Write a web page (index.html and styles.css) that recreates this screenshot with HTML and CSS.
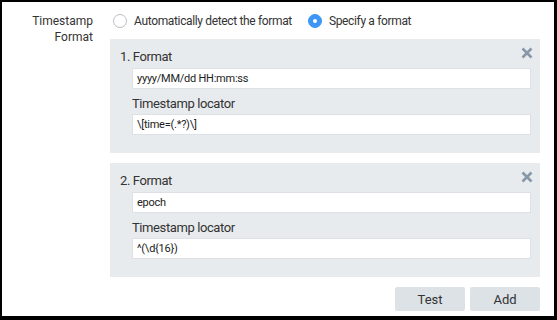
FILE: index.html
```html
<!DOCTYPE html>
<html lang="en">

<head>
    <meta charset="UTF-8">
    <meta name="viewport" content="width=device-width, initial-scale=1.0">
    <title>Timestamp Format</title>
    <link rel="stylesheet" href="styles.css">
</head>

<body>
    <div class="frame">
        <div class="field">
            <div class="field-label">Timestamp Format</div>

            <div class="field-body">
                <!-- Mode -->
                <div class="radios">
                    <label class="radio"><span class="dot"></span>Automatically detect the format</label>
                    <label class="radio checked"><span class="dot"></span>Specify a format</label>
                </div>

                <!-- Formats -->
                <div class="format">
                    <button class="remove" title="Remove">
                        <svg width="12" height="12" viewBox="0 0 12 12"><path d="M1.5 1.5 L10.5 10.5 M10.5 1.5 L1.5 10.5" stroke="#8797a8" stroke-width="2.6" /></svg>
                    </button>
                    <div class="format-title">1. Format</div>
                    <input class="text" type="text" value="yyyy/MM/dd HH:mm:ss">
                    <div class="sub-label">Timestamp locator</div>
                    <input class="text" type="text" value="\[time=(.*?)\]">
                </div>

                <div class="format">
                    <button class="remove" title="Remove">
                        <svg width="12" height="12" viewBox="0 0 12 12"><path d="M1.5 1.5 L10.5 10.5 M10.5 1.5 L1.5 10.5" stroke="#8797a8" stroke-width="2.6" /></svg>
                    </button>
                    <div class="format-title">2. Format</div>
                    <input class="text" type="text" value="epoch">
                    <div class="sub-label">Timestamp locator</div>
                    <input class="text" type="text" value="^(\d{16})">
                </div>

                <div class="actions">
                    <button class="btn">Test</button>
                    <button class="btn">Add</button>
                </div>
            </div>
        </div>
    </div>
</body>

</html>
```

FILE: styles.css
```css
* {
    box-sizing: border-box;
}

body {
    margin: 0;
    font-family: Roboto, "Liberation Sans", sans-serif;
    font-size: 12px;
    color: #333;
    background-color: #000;
}

.frame {
    width: 557px;
    height: 320px;
    background-color: #fff;
    border-style: solid;
    border-color: #000;
    border-width: 2px 3px 4px 2px;
    border-bottom-right-radius: 4px;
}

.field {
    display: grid;
    grid-template-columns: 91px 430px;
    column-gap: 17px;
}

.field-label {
    padding-top: 11px;
    text-align: right;
    font-size: 12px;
    line-height: 16px;
}

.field-body {
    padding-top: 10px;
}

.radios {
    display: flex;
    gap: 16px;
    height: 17px;
    margin-bottom: 10px;
    padding-left: 3px;
}

.radio {
    display: flex;
    align-items: center;
    gap: 7px;
    font-size: 12px;
    letter-spacing: -0.35px;
}

.dot {
    width: 14px;
    height: 14px;
    border-radius: 50%;
    border: 1px solid #b9bec4;
    background-color: #fff;
    position: relative;
}

.radio.checked .dot {
    border-color: #3d95f5;
    background-color: #3d95f5;
}

.radio.checked .dot::after {
    content: "";
    position: absolute;
    left: 4px;
    top: 4px;
    width: 4px;
    height: 4px;
    border-radius: 50%;
    background-color: #fff;
}

.format {
    position: relative;
    background-color: #e8ebee;
    padding: 10px 9px 18px 10px;
    margin-bottom: 10px;
}

.remove {
    position: absolute;
    top: 8px;
    right: 7px;
    padding: 0;
    border: 0;
    background: none;
    line-height: 0;
    cursor: pointer;
}

.format-title {
    font-size: 13px;
    line-height: 16px;
    letter-spacing: -0.4px;
    margin-bottom: 3px;
}

.sub-label {
    font-size: 13px;
    line-height: 16px;
    letter-spacing: -0.4px;
    margin: 7px 0 2px 12px;
}

.text {
    display: block;
    width: 399px;
    height: 21px;
    margin-left: 12px;
    padding: 0 4px;
    border: 1px solid #dde1e5;
    background-color: #fff;
    font-family: Roboto, "Liberation Sans", sans-serif;
    font-size: 11px;
    letter-spacing: -0.25px;
    color: #222;
}

.actions {
    display: flex;
    justify-content: flex-end;
    gap: 5px;
}

.btn {
    width: 70px;
    height: 24px;
    border: 0;
    border-radius: 2px;
    background-color: #dde2e7;
    font-family: Roboto, "Liberation Sans", sans-serif;
    font-size: 13px;
    color: #333;
    cursor: pointer;
}
```
